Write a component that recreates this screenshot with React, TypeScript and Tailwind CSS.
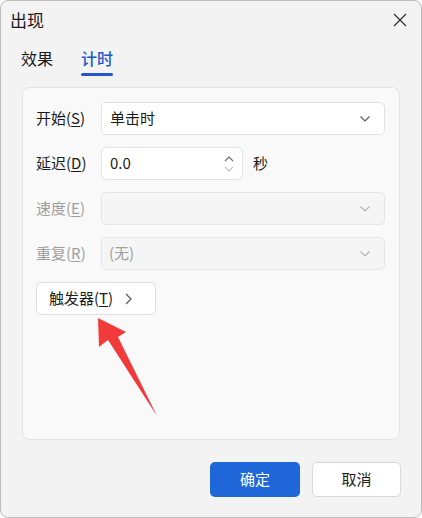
const font = { fontFamily: '"Noto Sans CJK SC", "Noto Sans", sans-serif' };

function Chevron({ light }: { light?: boolean }) {
  return (
    <svg width="12" height="8" viewBox="0 0 12 8" className="shrink-0">
      <path d="M1.5 1.5 L6 6 L10.5 1.5" fill="none" stroke={light ? "#b4b4b4" : "#5a5a5a"} strokeWidth="1.2" />
    </svg>
  );
}

function Label({ text, k, disabled }: { text: string; k: string; disabled?: boolean }) {
  return (
    <div className={"w-[65px] shrink-0 text-[15px] " + (disabled ? "text-[#9e9e9e]" : "text-[#1b1b1b]")}>
      {text}(<span className="underline underline-offset-2">{k}</span>)
    </div>
  );
}

export default function App() {
  return (
    <div
      style={font}
      className="relative w-[422px] h-[518px] bg-[#f3f3f3] border border-[#bdbdbd] rounded-lg overflow-hidden flex flex-col"
    >
      {/* title */}
      <div className="h-[37px] flex items-center justify-between pl-[9px] pr-[14px]">
        <span className="text-[17px] text-[#1b1b1b]">出现</span>
        <svg width="14" height="14" viewBox="0 0 14 14">
          <path d="M1 1 L13 13 M13 1 L1 13" stroke="#2b2b2b" strokeWidth="1.2" />
        </svg>
      </div>

      {/* tabs */}
      <div className="flex gap-[28px] pl-[20px] h-[49px]">
        <div className="flex flex-col pt-[8px] text-[16px] text-[#1b1b1b]">效果</div>
        <div className="flex flex-col pt-[8px] text-[16px] text-[#2458c8] font-medium">
          <span>计时</span>
          <div className="mt-[3px] h-[3px] w-[32px] rounded-full bg-[#2458c8]" />
        </div>
      </div>

      {/* panel */}
      <div className="mx-[21px] h-[353px] bg-[#f9f9f9] border border-[#e3e3e3] rounded-lg pl-[13px] pr-[14px] pt-[14px] flex flex-col gap-3">
        <div className="flex items-center">
          <Label text="开始" k="S" />
          <div className="flex-1 h-[33px] bg-white border border-[#e1e1e1] rounded-[5px] flex items-center justify-between pl-[8px] pr-[13px] text-[15px] text-[#1b1b1b]">
            <span>单击时</span>
            <Chevron />
          </div>
        </div>

        <div className="flex items-center">
          <Label text="延迟" k="D" />
          <div className="w-[142px] h-[33px] bg-white border border-[#e1e1e1] rounded-[5px] flex items-center justify-between pl-[8px] pr-[8px] text-[15px] text-[#1b1b1b]">
            <span>0.0</span>
            <div className="flex flex-col gap-[4px]">
              <svg width="10" height="6" viewBox="0 0 10 6">
                <path d="M1 5 L5 1 L9 5" fill="none" stroke="#6a6a6a" strokeWidth="1.1" />
              </svg>
              <svg width="10" height="6" viewBox="0 0 10 6">
                <path d="M1 1 L5 5 L9 1" fill="none" stroke="#c2c2c2" strokeWidth="1.1" />
              </svg>
            </div>
          </div>
          <span className="ml-[10px] text-[15px] text-[#1b1b1b]">秒</span>
        </div>

        <div className="flex items-center">
          <Label text="速度" k="E" disabled />
          <div className="flex-1 h-[33px] bg-[#f5f5f5] border border-[#e6e6e6] rounded-[5px] flex items-center justify-end pr-[13px]">
            <Chevron light />
          </div>
        </div>

        <div className="flex items-center">
          <Label text="重复" k="R" disabled />
          <div className="flex-1 h-[33px] bg-[#f5f5f5] border border-[#e6e6e6] rounded-[5px] flex items-center justify-between pl-[7px] pr-[13px] text-[15px] text-[#a0a0a0]">
            <span>(无)</span>
            <Chevron light />
          </div>
        </div>

        <div className="flex">
          <div className="w-[120px] h-[33px] bg-white border border-[#dedede] rounded-[5px] flex items-center pl-[12px] gap-[12px] text-[15px] text-[#1b1b1b]">
            <span>
              触发器(<span className="underline underline-offset-2">T</span>)
            </span>
            <svg width="7" height="12" viewBox="0 0 7 12">
              <path d="M1 1 L6 6 L1 11" fill="none" stroke="#5a5a5a" strokeWidth="1.3" />
            </svg>
          </div>
        </div>
      </div>

      {/* buttons */}
      <div className="flex justify-end gap-3 pr-[20px] pt-[22px]">
        <div className="w-[90px] h-[35px] rounded-[5px] bg-[#1f66d9] text-white text-[15px] flex items-center justify-center">
          确定
        </div>
        <div className="w-[89px] h-[35px] rounded-[5px] bg-white border border-[#d9d9d9] text-[#1b1b1b] text-[15px] flex items-center justify-center">
          取消
        </div>
      </div>

      {/* annotation arrow */}
      <svg className="absolute left-0 top-0 pointer-events-none" width="422" height="518">
        <polygon points="97,317 125,331 117,336 156,415 107,339 98,346" fill="#f23a3a" />
      </svg>
    </div>
  );
}
